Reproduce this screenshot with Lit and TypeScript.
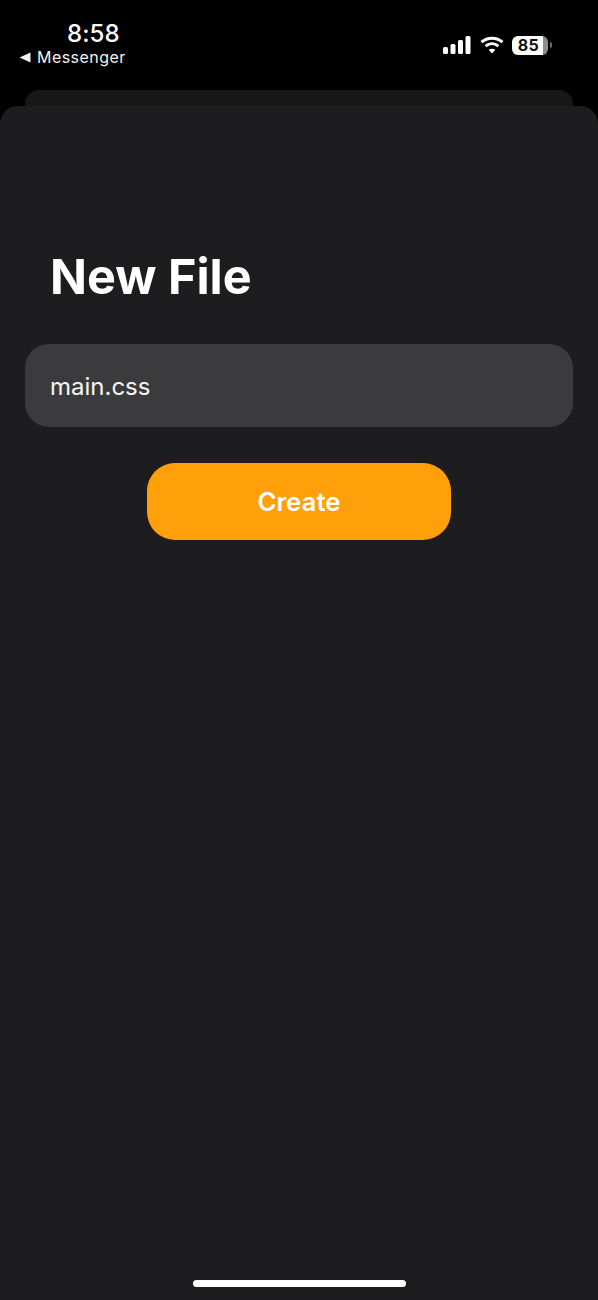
import { LitElement, html, css } from "lit";
import { customElement } from "lit/decorators.js";

@customElement("app-root")
export class AppRoot extends LitElement {
  static styles = css`
    :host { display: block; width: 598px; height: 1300px; background: #000; font-family: Inter, "Liberation Sans", sans-serif; color: #fff; overflow: hidden; }
    .status { height: 90px; display: flex; justify-content: space-between; box-sizing: border-box; padding: 20px 49px 0 19px; }
    .left { display: flex; flex-direction: column; align-items: flex-start; }
    .time { font-size: 24px; font-weight: 500; line-height: 27px; letter-spacing: 0.1px; margin-left: 48px; }
    .back { display: flex; align-items: center; gap: 6px; font-size: 16px; line-height: 20px; letter-spacing: 0.45px; color: #f2f2f2; }
    .back svg { display: block; }
    .right { display: flex; align-items: center; height: 20px; margin-top: 15px; }
    .right svg { display: block; }
    .signal { margin-right: 9px; }
    .wifi { margin-right: 8px; }
    .battery { display: flex; align-items: center; gap: 2px; margin-right: -3px; }
    .cell { width: 36px; height: 19px; border-radius: 6px; box-sizing: border-box; background: linear-gradient(90deg, #fff 0 85%, #8c8c8c 85% 100%); color: #111; font-size: 16px; font-weight: 700; line-height: 19px; text-align: center; letter-spacing: 0.5px; padding-right: 3px; }
    .nub { width: 2px; height: 6px; border-radius: 0 2px 2px 0; background: #6e6e6e; }
    .sheet-back { height: 16px; margin: 0 25px; background: #171718; border-radius: 14px 14px 0 0; }
    .sheet { height: 1194px; background: #1d1d1f; border-radius: 18px 18px 0 0; box-sizing: border-box; padding: 141px 25px 0; display: flex; flex-direction: column; align-items: stretch; }
    h1 { margin: 0 0 0 25px; font-size: 48.5px; line-height: 60px; font-weight: 700; }
    .input { margin-top: 37px; height: 83px; border-radius: 24px; background: #3b3b3d; display: flex; align-items: center; box-sizing: border-box; padding: 2px 25px 0; font-size: 24px; font-weight: 400; color: #f5f5f5; }
    .btn { align-self: center; margin-top: 36px; width: 304px; height: 77px; border-radius: 28px; background: #ff9f0a; display: flex; align-items: center; justify-content: center; font-size: 25.8px; font-weight: 600; color: #fff; }
    .spacer { flex: 1; }
    .home { align-self: center; width: 213px; height: 7px; border-radius: 4px; background: #fff; margin-bottom: 13px; }
  `;

  render() {
    return html`
      <div class="status">
        <div class="left">
          <div class="time">8:58</div>
          <div class="back">
            <svg width="12" height="11" viewBox="0 0 12 11"><path d="M0.5 5.5 11.5 0.5V10.5Z" fill="#f2f2f2"/></svg>
            <span>Messenger</span>
          </div>
        </div>
        <div class="right">
          <svg class="signal" width="28" height="18" viewBox="0 0 28 18" fill="#fff">
            <rect x="0" y="11" width="5" height="7" rx="1.5"/>
            <rect x="7.5" y="8" width="5" height="10" rx="1.5"/>
            <rect x="15" y="4" width="5" height="14" rx="1.5"/>
            <rect x="22.5" y="0" width="5" height="18" rx="1.5"/>
          </svg>
          <svg class="wifi" width="24" height="18" viewBox="0 0 24 18" fill="none" stroke="#fff" stroke-width="3">
            <path d="M1.5 6.2C7.5 0.8 16.5 0.8 22.5 6.2"/>
            <path d="M5.6 10.2C9.4 7 14.6 7 18.4 10.2"/>
            <path d="M12 17.5 8.6 13.7C10.6 12.3 13.4 12.3 15.4 13.7Z" fill="#fff" stroke="none"/>
          </svg>
          <div class="battery"><div class="cell">85</div><div class="nub"></div></div>
        </div>
      </div>
      <div class="sheet-back"></div>
      <div class="sheet">
        <h1>New File</h1>
        <div class="input">main.css</div>
        <div class="btn">Create</div>
        <div class="spacer"></div>
        <div class="home"></div>
      </div>
    `;
  }
}
